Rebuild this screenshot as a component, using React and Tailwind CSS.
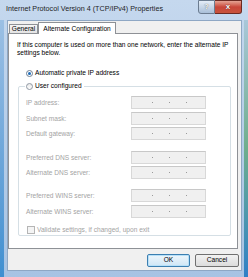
import React from 'react';

const font = { fontFamily: '"Liberation Sans", Arial, sans-serif' };

// Disabled IP field with three separator dots
const IpBox = () => (
  <div className="w-[75px] h-[13px] border border-[#d8d8d8] border-t-[#c8c8c8] bg-[#f0f0f0] flex items-center justify-center gap-[16px] pl-[2px]">
    <span className="w-[1px] h-[1px] bg-[#9a9a9a]" />
    <span className="w-[1px] h-[1px] bg-[#9a9a9a]" />
    <span className="w-[1px] h-[1px] bg-[#9a9a9a]" />
  </div>
);

const Row = ({ label, mt }) => (
  <div className={`flex items-center justify-between pl-[7px] pr-[24px] ${mt}`}>
    <span className="text-[#a3a3a3]">{label}</span>
    <IpBox />
  </div>
);

const App = () => {
  return (
    <div
      className="w-[248px] h-[277px] flex flex-col bg-gradient-to-b from-[#c5d8ee] via-[#b6cde8] to-[#a7c3e3] text-[6.6px] leading-[8px] text-black relative overflow-hidden"
      style={font}
    >
      {/* left and right frame tints */}
      <div className="absolute left-0 top-[20px] bottom-0 w-[4px] bg-gradient-to-b from-[#9cc0e4] to-[#3f8fd0]" />
      <div className="absolute right-0 top-[20px] bottom-0 w-[4px] bg-gradient-to-b from-[#a9c7d9] via-[#6fae8c] to-[#2f7fc6]" />

      {/* Title bar */}
      <div className="h-[20px] flex items-start relative">
        <span className="pl-[6px] pt-[5px] text-[7.2px] text-[#1e1e1e]">
          Internet Protocol Version 4 (TCP/IPv4) Properties
        </span>
        <div className="absolute right-[6px] top-0 flex">
          <div className="w-[17px] h-[14px] border border-[#6b7c90] rounded-bl-[3px] bg-gradient-to-b from-[#e4edf7] to-[#a9bfd8] flex items-center justify-center text-[7px] font-bold text-white" style={{ textShadow: '0 0 1px #333' }}>
            ?
          </div>
          <div className="w-[27px] h-[14px] border border-l-0 border-[#6b2a22] rounded-br-[3px] bg-gradient-to-b from-[#e4a394] via-[#c9463a] to-[#c8533c] flex items-center justify-center text-[8px] font-bold text-white" style={{ textShadow: '0 0 1px #300' }}>
            x
          </div>
        </div>
      </div>

      {/* Dialog body */}
      <div className="ml-[7px] mr-[6px] h-[251px] bg-[#f0f0f0] border border-[#8ea7c4] flex flex-col relative">
        {/* Tabs */}
        <div className="flex items-end h-[11px] mt-[1px] pl-[1px]">
          <div className="w-[29px] h-[9px] border border-b-0 border-[#8e9196] bg-gradient-to-b from-[#f6f6f6] to-[#e3e3e3] flex items-center justify-center rounded-t-[1px]">
            General
          </div>
          <div className="w-[78px] h-[12px] border border-b-0 border-[#8e9196] bg-white flex justify-center pt-[2px] -mb-[1px] relative z-10">
            Alternate Configuration
          </div>
        </div>

        {/* Panel */}
        <div className="w-[230px] h-[216px] border border-[#8e9196] bg-white flex flex-col">
          <p className="pl-[8px] pt-[7px] pr-[4px]">
            If this computer is used on more than one network, enter the alternate IP settings below.
          </p>

          <div className="flex items-center gap-[2px] pl-[17px] mt-[12px]">
            <span className="w-[7px] h-[7px] rounded-full border border-[#6f7f92] bg-white flex items-center justify-center">
              <span className="w-[3px] h-[3px] rounded-full bg-[#1d6bb7]" />
            </span>
            <span>Automatic private IP address</span>
          </div>

          {/* User configured group */}
          <div className="ml-[9px] mr-[6px] mt-[9px] h-[150px] border border-[#d5dfe5] rounded-[2px] relative flex flex-col pt-[9px]">
            <div className="absolute -top-[5px] left-[6px] bg-white flex items-center gap-[2px] pr-[2px] pl-[1px]">
              <span className="w-[7px] h-[7px] rounded-full border border-[#8f98a3] bg-gradient-to-b from-[#e8e8e8] to-white" />
              <span>User configured</span>
            </div>

            <Row label="IP address:" mt="mt-0" />
            <Row label="Subnet mask:" mt="mt-[3px]" />
            <Row label="Default gateway:" mt="mt-[2px]" />
            <Row label="Preferred DNS server:" mt="mt-[11px]" />
            <Row label="Alternate DNS server:" mt="mt-[2px]" />
            <Row label="Preferred WINS server:" mt="mt-[10px]" />
            <Row label="Alternate WINS server:" mt="mt-[3px]" />

            <div className="flex items-center gap-[2px] pl-[8px] mt-[8px]">
              <span className="w-[8px] h-[8px] border border-[#b5b5b5] bg-[#f4f4f4]" />
              <span className="text-[#a3a3a3]">Validate settings, if changed, upon exit</span>
            </div>
          </div>
        </div>

        {/* Buttons */}
        <div className="flex justify-end gap-[5px] pr-[2px] mt-[5px]">
          <button className="w-[43px] h-[13px] border border-[#3c7fb1] rounded-[2px] bg-gradient-to-b from-[#eef6fb] to-[#cfe6f6] text-[6.6px] leading-none shadow-[inset_0_0_0_1px_#b7e0f8]">
            OK
          </button>
          <button className="w-[44px] h-[13px] border border-[#707070] rounded-[2px] bg-gradient-to-b from-[#f2f2f2] to-[#dcdcdc] text-[6.6px] leading-none">
            Cancel
          </button>
        </div>
      </div>
    </div>
  );
};

export default App;
